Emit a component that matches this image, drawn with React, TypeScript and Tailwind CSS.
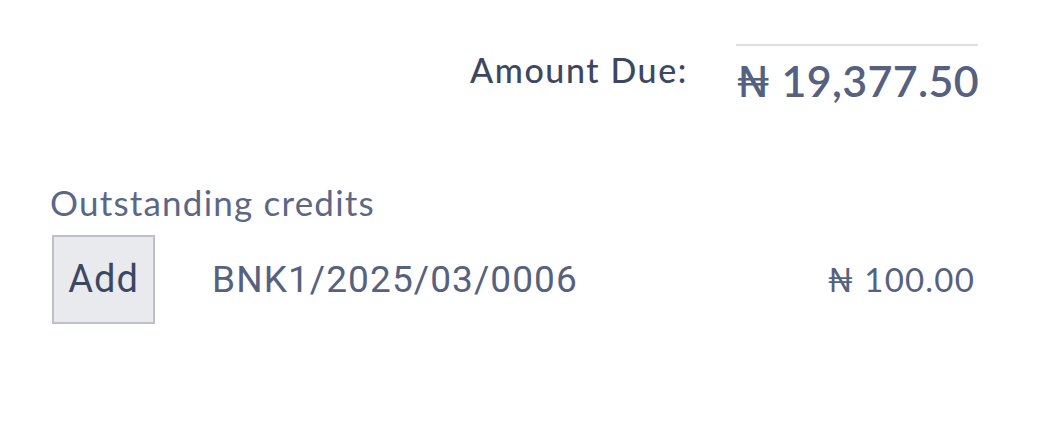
import React from 'react';

export default function App() {
    return (
        <div className="w-[1041px] h-[426px] bg-white font-['Lato','Noto_Sans',sans-serif]">
            <div className="flex justify-end pt-[44px] pr-[63px]">
                <div className="flex items-start">
                    <div className="pt-[6px] pr-[48px] text-[34px] leading-[40px] font-medium tracking-[1.6px] text-[#3d4761]">
                        Amount Due:
                    </div>
                    <div className="w-[242px] border-t-2 border-[#dcdfe8] pt-[11px] text-right whitespace-nowrap text-[43px] leading-[48px] font-semibold tracking-[0.3px] text-[#56617f]">
                        ₦ 19,377.50
                    </div>
                </div>
            </div>
            <div className="pl-[50px] pt-[77px] text-[35px] leading-[40px] font-normal tracking-[1.2px] text-[#5c6786]">
                Outstanding credits
            </div>
            <div className="flex items-center pl-[52px] pr-[66px] mt-[13px]">
                <button className="w-[103px] h-[89px] bg-[#e9eaee] border-2 border-[#bdc0c8] font-['Roboto',sans-serif] text-[38px] tracking-[1px] text-[#3d4761]">
                    Add
                </button>
                <div className="ml-[57px] flex-1 font-['Roboto',sans-serif] text-[37px] text-[#56617f] tracking-[1.1px]">
                    BNK1/2025/03/0006
                </div>
                <div className="text-[33px] tracking-[1.2px] text-[#56617f]">₦ 100.00</div>
            </div>
        </div>
    );
}
